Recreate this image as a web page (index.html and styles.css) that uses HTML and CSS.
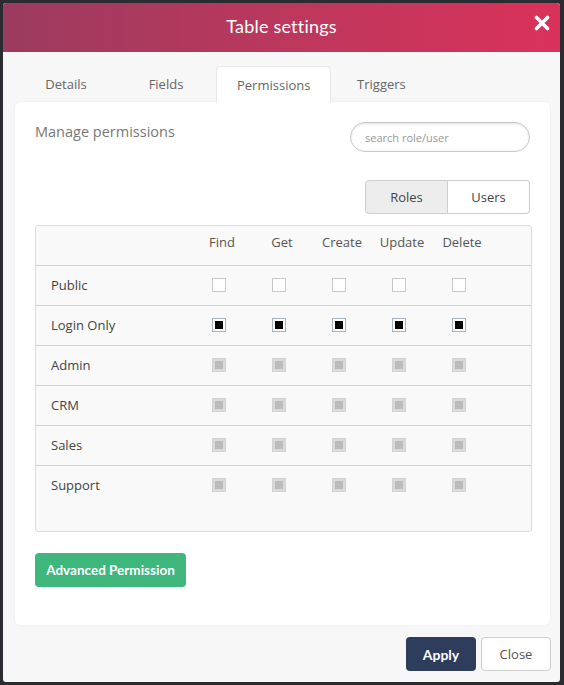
FILE: index.html
```html
<!DOCTYPE html>
<html>
  <head>
    <meta charset="utf-8">
    <title>Table settings</title>
    <link rel="stylesheet" href="styles.css">
  </head>
  <body>
    <div class="modal">
      <div class="modal-head">
        <span class="modal-title">Table settings</span>
        <a href="#" class="modal-close">
          <svg width="16" height="16" viewBox="0 0 16 16"><path d="M2.5 2.5l11 11M13.5 2.5l-11 11" stroke="#fff" stroke-width="3.6" stroke-linecap="round"/></svg>
        </a>
      </div>
      <div class="modal-body">
        <ul class="tabs">
          <li><a href="#">Details</a></li>
          <li><a href="#">Fields</a></li>
          <li class="active"><a href="#">Permissions</a></li>
          <li><a href="#">Triggers</a></li>
        </ul>
        <div class="panel">
          <div class="panel-top">
            <h3 class="panel-title">Manage permissions</h3>
            <input class="search" type="text" placeholder="search role/user">
          </div>
          <div class="switch">
            <a href="#" class="switch-item on">Roles</a><a href="#" class="switch-item">Users</a>
          </div>
          <div class="perm-wrap">
            <table class="perm">
              <colgroup>
                <col class="c-name"><col class="c-op"><col class="c-op"><col class="c-op"><col class="c-op"><col class="c-op"><col>
              </colgroup>
              <thead>
                <tr><th class="name"></th><th>Find</th><th>Get</th><th>Create</th><th>Update</th><th>Delete</th><th></th></tr>
              </thead>
              <tbody>
                <tr><td class="name">Public</td><td><span class="cb"></span></td><td><span class="cb"></span></td><td><span class="cb"></span></td><td><span class="cb"></span></td><td><span class="cb"></span></td><td></td></tr>
                <tr><td class="name">Login Only</td><td><span class="cb checked"></span></td><td><span class="cb checked"></span></td><td><span class="cb checked"></span></td><td><span class="cb checked"></span></td><td><span class="cb checked"></span></td><td></td></tr>
                <tr><td class="name">Admin</td><td><span class="cb off"></span></td><td><span class="cb off"></span></td><td><span class="cb off"></span></td><td><span class="cb off"></span></td><td><span class="cb off"></span></td><td></td></tr>
                <tr><td class="name">CRM</td><td><span class="cb off"></span></td><td><span class="cb off"></span></td><td><span class="cb off"></span></td><td><span class="cb off"></span></td><td><span class="cb off"></span></td><td></td></tr>
                <tr><td class="name">Sales</td><td><span class="cb off"></span></td><td><span class="cb off"></span></td><td><span class="cb off"></span></td><td><span class="cb off"></span></td><td><span class="cb off"></span></td><td></td></tr>
                <tr><td class="name">Support</td><td><span class="cb off"></span></td><td><span class="cb off"></span></td><td><span class="cb off"></span></td><td><span class="cb off"></span></td><td><span class="cb off"></span></td><td></td></tr>
              </tbody>
            </table>
          </div>
          <a href="#" class="btn btn-green">Advanced Permission</a>
        </div>
        <div class="modal-foot">
          <a href="#" class="btn btn-dark">Apply</a>
          <a href="#" class="btn btn-light">Close</a>
        </div>
      </div>
    </div>
  </body>
</html>
```

FILE: styles.css
```css
html, body{height:100%;}
body{margin:0; padding:3px 4px 3px 3px; box-sizing:border-box; background:#2b2c31; font-family:"Open Sans", sans-serif; color:#444;}
a{text-decoration:none;}

.modal{height:679px; background:#f7f7f7; border-radius:3px; overflow:hidden; display:flex; flex-direction:column;}
.modal-head{height:49px; flex:none; display:flex; align-items:center; justify-content:center; position:relative; background:linear-gradient(to right, #9b3b5f, #b8385d 45%, #da325a);}
.modal-title{color:#fff; font-family:Lato, sans-serif; font-size:18px; letter-spacing:0.2px; margin-top:-3px;}
.modal-close{position:absolute; right:10px; top:12px; width:16px; height:16px; display:block;}
.modal-close svg{display:block;}

.modal-body{flex:1; display:flex; flex-direction:column; padding:14px 10px 0 12px;}

.tabs{list-style:none; margin:0; padding:0 0 0 1px; display:flex; height:37px; position:relative; z-index:1;}
.tabs li{min-width:100px; display:flex;}
.tabs li a{flex:1; display:flex; align-items:center; justify-content:center; color:#666; font-size:13px; padding:0 20px; margin-top:-1px;}
.tabs li.active{background:#fff; border:1px solid #e8e8e8; border-bottom:none; border-radius:4px 4px 0 0; min-width:113px;}
.tabs li.active a{margin-top:0;}

.panel{background:#fff; border-radius:5px; box-shadow:0 0 2px rgba(0,0,0,0.08); padding:20px 18px 38px 20px; margin-top:-1px;}
.panel-top{display:flex; justify-content:space-between; align-items:flex-start; padding-right:2px;}
.panel-title{margin:0; font-weight:normal; font-size:14.5px; color:#777; line-height:20px;}
.search{width:180px; height:30px; box-sizing:border-box; border:1px solid #c8c8c8; border-radius:15px; padding:0 14px; font-family:"Open Sans", sans-serif; font-size:11px; box-shadow:inset 0 1px 3px rgba(0,0,0,0.12); outline:none;}
.search::placeholder{color:#999;}

.switch{display:flex; justify-content:flex-end; margin:28px 2px 11px 0;}
.switch-item{width:82px; height:34px; box-sizing:border-box; display:flex; align-items:center; justify-content:center; border:1px solid #cdcdcd; color:#444; font-size:13px; background:#fff;}
.switch-item:first-child{border-radius:4px 0 0 4px; width:83px;}
.switch-item:last-child{border-radius:0 4px 4px 0; border-left:none;}
.switch-item.on{background:#ededed;}

.perm-wrap{background:#f9f9f9; border:1px solid #dcdcdc; border-radius:3px; height:307px; box-sizing:border-box;}
.perm{border-collapse:collapse; width:100%; table-layout:fixed;}
.perm .c-name{width:153px;}
.perm .c-op{width:60px;}
.perm th, .perm td{height:37px; padding:0 0 2px 0; text-align:center; font-size:13px; font-weight:normal; border-bottom:1px solid #d2d2d2; vertical-align:middle;}
.perm tbody tr:last-child td{border-bottom:none;}
.perm th{height:31px; color:#555; padding:0 0 8px 6px;}
.perm .name{text-align:left; padding:0 0 2px 15px; color:#444;}

.cb{display:inline-block; width:14px; height:14px; box-sizing:border-box; border:1px solid #c9c9c9; background:#fff; vertical-align:middle; margin-top:-2px;}
.cb.checked{border-color:#a7b3c1; padding:2px;}
.cb.checked::after{content:""; display:block; width:8px; height:8px; background:#000;}
.cb.off{background:#dadada; border-color:#d2d2d2; padding:2px;}
.cb.off::after{content:""; display:block; width:8px; height:8px; background:#bcbcbc;}

.btn{display:inline-flex; align-items:center; justify-content:center; height:34px; box-sizing:border-box; border-radius:4px; font-size:13px; font-family:"Open Sans", sans-serif;}
.panel .btn-green{margin-top:21px; width:151px; background:#3fb67b; color:#fff; font-weight:bold; font-family:Lato, sans-serif; font-size:13.5px;}
.modal-foot{display:flex; justify-content:flex-end; gap:5px; padding:12px 0 0 0; margin-right:-1px;}
.btn-dark{width:70px; background:#2e3d5b; color:#fff; font-weight:bold; font-family:Lato, sans-serif; font-size:14px;}
.btn-light{width:70px; background:#fff; color:#555; border:1px solid #cfcfcf;}
```
